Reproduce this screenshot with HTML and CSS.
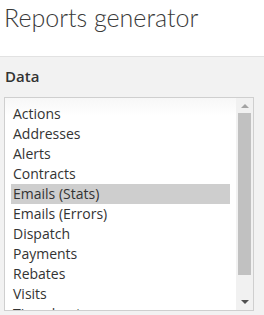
FILE: index.html
```html
<!DOCTYPE html>
<html lang="en">
<head>
  <meta charset="UTF-8" />
  <title>Reports generator</title>
  <link rel="stylesheet" href="styles.css">
</head>
<body>

  <div class="header">
    <h1 class="page-title">Reports generator</h1>
  </div>

  <div class="panel">
    <div class="field-label">Data</div>

    <div class="listbox">
      <div class="options">
        <div class="option">Actions</div>
        <div class="option">Addresses</div>
        <div class="option">Alerts</div>
        <div class="option">Contracts</div>
        <div class="option selected">Emails (Stats)</div>
        <div class="option">Emails (Errors)</div>
        <div class="option">Dispatch</div>
        <div class="option">Payments</div>
        <div class="option">Rebates</div>
        <div class="option">Visits</div>
        <div class="option">Timesheets</div>
      </div>
      <div class="scrollbar">
        <span class="arrow up"></span>
        <div class="thumb"></div>
        <span class="arrow down"></span>
      </div>
    </div>
  </div>

</body>
</html>
```

FILE: styles.css
```css
body {
  margin: 0;
  font-family: 'Open Sans', sans-serif;
  color: #333;
  background: #f2f2f2;
  height: 315px;
  overflow: hidden;
}

.header {
  background: #fff;
  height: 56px;
  border-bottom: 1px solid #e2e2e2;
}

.page-title {
  margin: 0;
  padding: 0 0 0 4px;
  font-family: 'Lato', sans-serif;
  font-size: 25px;
  font-weight: 300;
  line-height: 35px;
  color: #3a3a3a;
}

.panel {
  padding: 0 10px 0 4px;
}

.field-label {
  font-size: 15px;
  font-weight: 600;
  line-height: 20px;
  padding: 9px 0 0 1px;
  height: 31px;
}

.listbox {
  display: flex;
  height: 212px;
  border: 1px solid #cfcfcf;
  background: linear-gradient(#f7f7f7, #fff 18px);
}

.options {
  flex: 1;
  padding: 6px 6px 0 6px;
  overflow: hidden;
}

.option {
  font-size: 14px;
  line-height: 20px;
  padding-left: 2px;
  white-space: nowrap;
  color: #333;
}

.option.selected {
  background: #cecece;
}

/* fake scrollbar */
.scrollbar {
  width: 17px;
  background: #f1f1f1;
  display: flex;
  flex-direction: column;
  align-items: center;
}

.arrow {
  width: 0;
  height: 0;
  border-left: 4px solid transparent;
  border-right: 4px solid transparent;
}

.arrow.up {
  margin: 6px 0 5px;
  border-bottom: 4px solid #a3a3a3;
}

.arrow.down {
  margin-top: auto;
  margin-bottom: 6px;
  border-top: 4px solid #505050;
}

.thumb {
  width: 13px;
  height: 162px;
  background: #c1c1c1;
}
```
